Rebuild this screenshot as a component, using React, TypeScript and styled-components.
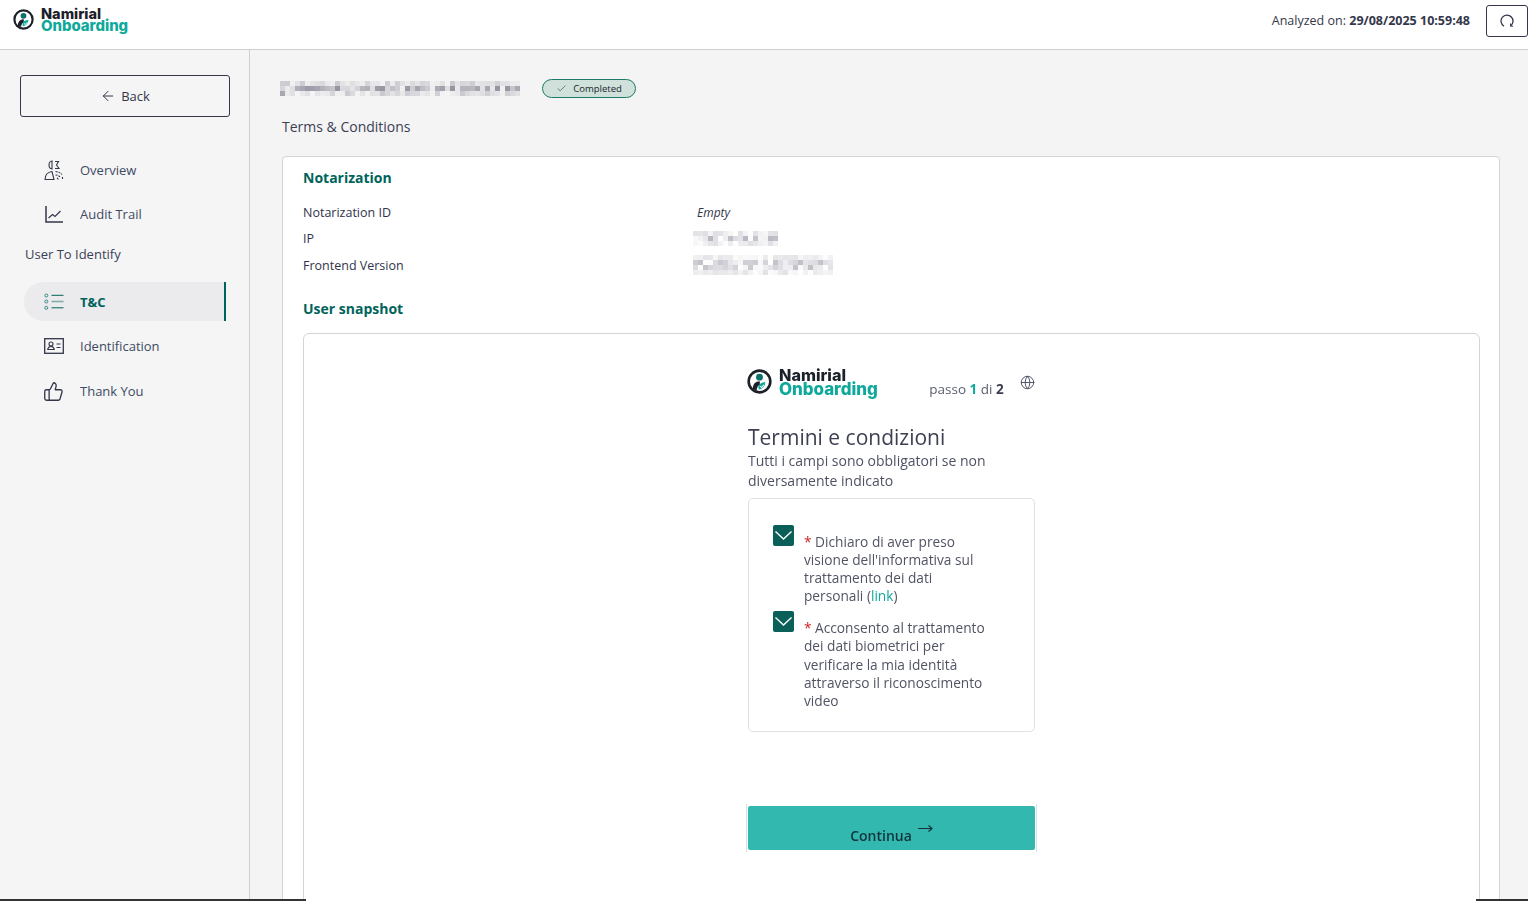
import { ReactNode } from "react";
import styled, { createGlobalStyle } from "styled-components";
import { ArrowLeft, Check, Globe, ThumbsUp } from "lucide-react";

const INK = "#34374b";
const TEAL = "#00635b";
const MINT = "#0fa99b";

const GlobalStyle = createGlobalStyle`
  html, body {
    margin: 0;
    height: 100%;
    overflow: hidden;
    background: #fff;
    font-family: "Open Sans", "Noto Sans", sans-serif;
    color: ${INK};
  }
  * { box-sizing: border-box; }
`;

const LogoMark = ({ size }: { size: number }) => (
  <svg width={size} height={size} viewBox="0 0 24 24" fill="none">
    <circle cx="12" cy="12" r="10.400" stroke="#1b2029" strokeWidth="2.500" />
    <circle cx="12" cy="7.800" r="3.300" fill="#0c6f69" />
    <path d="M5.500 19.500c0-5 2.500-7.800 6.800-7.800v3.600c-1.800.5-2.800 2-3 5.200z" fill="#1b2029" />
    <path d="M10.800 17.500c.6-3 3-4.800 6.800-4.800-.2 4-2.500 6.500-6.200 7z" fill="#0fa99b" />
    <path d="M12.600 16.500l1.500 1.300 2-2.500" stroke="#fff" strokeWidth="1" />
  </svg>
);

const Brand = styled.div`
  display: flex;
  align-items: center;
  gap: 7px;
  font-family: Inter, "Liberation Sans", sans-serif;
  font-weight: 800;
`;

const BrandText = styled.div<{ $small?: boolean }>`
  display: flex;
  flex-direction: column;
  font-size: ${(p) => (p.$small ? "14.500px" : "16.200px")};
  line-height: ${(p) => (p.$small ? "13px" : "14px")};
  color: #1b2029;
  span:last-child {
    color: ${MINT};
    font-size: ${(p) => (p.$small ? "14.900px" : "16.900px")};
  }
`;

const Header = styled.header`
  height: 50px;
  flex: none;
  display: flex;
  align-items: center;
  justify-content: space-between;
  padding: 0 0 10px 13px;
  background: #fff;
  border-bottom: 1px solid #cfcfcf;
`;

const HeaderRight = styled.div`
  display: flex;
  align-items: center;
  gap: 16px;
  font-size: 12.500px;
  margin-top: 2px;
  b { font-weight: 700; }
`;

const RefreshButton = styled.button`
  width: 42px;
  height: 32px;
  padding: 0;
  display: flex;
  align-items: center;
  justify-content: center;
  background: #fff;
  border: 1px solid ${INK};
  border-radius: 3px;
  color: ${INK};
`;

const Shell = styled.div`
  height: 100vh;
  display: flex;
  flex-direction: column;
`;

const Body = styled.div`
  flex: 1;
  min-height: 0;
  display: flex;
`;

const Sidebar = styled.aside`
  width: 250px;
  flex: none;
  padding: 25px 24px 0 20px;
  background: #f5f5f5;
  border-right: 1px solid #cfcfcf;
`;

const BackButton = styled.button`
  width: 210px;
  height: 42px;
  display: flex;
  align-items: center;
  justify-content: center;
  gap: 5px;
  background: transparent;
  border: 1px solid ${INK};
  border-radius: 3px;
  color: ${INK};
  font: 500 13px "Open Sans", sans-serif;
  margin-bottom: 31px;
`;

const NavItem = styled.div<{ $active?: boolean; $h: number }>`
  height: ${(p) => p.$h}px;
  width: 202px;
  margin-left: 4px;
  padding-left: 19px;
  display: flex;
  align-items: center;
  gap: 16px;
  font-size: 13px;
  font-weight: ${(p) => (p.$active ? 700 : 400)};
  color: ${(p) => (p.$active ? TEAL : "#3f4a63")};
  background: ${(p) => (p.$active ? "#ebebed" : "transparent")};
  border-radius: ${(p) => (p.$active ? "20px 0 0 20px" : "0")};
  border-right: ${(p) => (p.$active ? `2px solid ${TEAL}` : "none")};
`;

const NavIconBox = styled.span`
  width: 21px;
  display: flex;
  justify-content: center;
  color: ${INK};
`;

const NavSection = styled.div`
  height: 46px;
  margin-left: 5px;
  padding-top: 9px;
  font-size: 13px;
  color: #3a3f55;
`;

const Main = styled.main`
  flex: 1;
  min-width: 0;
  padding: 29px 28px 0 30px;
  background: #f4f4f4;
  overflow: hidden;
`;

const TitleRow = styled.div`
  display: flex;
  align-items: center;
  gap: 18px;
  height: 19px;
`;

const Badge = styled.div`
  width: 94px;
  height: 19px;
  display: flex;
  align-items: center;
  justify-content: center;
  gap: 6px;
  background: #cfe1da;
  border: 1px solid #1d7a68;
  border-radius: 10px;
  font-size: 9.500px;
  font-weight: 500;
  color: #20242e;
`;

const PageTitle = styled.h1`
  margin: 19px 0 19px 2px;
  font-size: 14px;
  line-height: 20px;
  font-weight: 500;
  color: #3a3f55;
`;

const Card = styled.section`
  margin-left: 2px;
  height: 800px;
  padding: 11px 19px 0 20px;
  background: #fff;
  border: 1px solid #d5d5d5;
  border-radius: 4px 4px 0 0;
`;

const CardHeading = styled.h2`
  margin: 0;
  font-size: 14px;
  line-height: 20px;
  font-weight: 700;
  color: ${TEAL};
`;

const InfoList = styled.dl`
  margin: 11px 0 0;
  display: grid;
  grid-template-columns: 392px 1fr;
  grid-auto-rows: 26.500px;
  align-items: center;
  font-size: 12.500px;
  dt { font-weight: 500; color: #30334a; }
  dd { margin: 0; }
`;

const EmptyValue = styled.dd`
  font-style: italic;
  font-size: 12px;
  padding-left: 2px;
`;

const SnapshotHeading = styled(CardHeading)`
  margin-top: 20px;
`;

const Snapshot = styled.div`
  margin-top: 14px;
  height: 700px;
  border: 1px solid #d5d5d5;
  border-radius: 6px 6px 0 0;
  display: flex;
  justify-content: center;
  padding: 34px 0 0 0;
`;

const SnapshotColumn = styled.div`
  width: 287px;
  filter: blur(0.35px);
  color: #4a4d5f;
`;

const SnapshotTop = styled.div`
  display: flex;
  align-items: flex-start;
  height: 55px;
`;

const SnapshotBrandWrap = styled.div`
  margin-left: -1px;
  width: 183px;
`;

const Steps = styled.div`
  margin-top: 12px;
  width: 91px;
  font-size: 13.500px;
  color: #5a5d6e;
  white-space: nowrap;
  b { color: #3a3d4f; }
  b.now { color: ${MINT}; }
`;

const StepGlobe = styled.span`
  margin-top: 5px;
  color: #55586a;
`;

const SnapshotTitle = styled.h3`
  margin: 0;
  font-size: 21px;
  line-height: 28px;
  font-weight: 400;
  color: #3d4053;
`;

const SnapshotLead = styled.p`
  margin: 0 0 7px;
  font-size: 14px;
  line-height: 20px;
  color: #4f5263;
`;

const ConsentBox = styled.div`
  height: 234px;
  padding: 26px 24px 0 24px;
  border: 1px solid #e0e0e0;
  border-radius: 5px;
  display: flex;
  flex-direction: column;
  gap: 5.500px;
`;

const ConsentRow = styled.div`
  display: flex;
  align-items: flex-start;
  gap: 10px;
`;

const CheckSquare = styled.span`
  width: 21px;
  height: 21px;
  flex: none;
  background: #0a5f58;
  border-radius: 2px;
`;

const ConsentText = styled.div`
  width: 190px;
  padding-top: 8px;
  font-size: 13.700px;
  line-height: 18.300px;
  color: #515464;
  i { font-style: normal; color: #c22; }
  a { color: ${MINT}; }
`;

const ContinueOuter = styled.div`
  margin: 72px -2px 0;
  padding: 2px 1px;
  border-left: 1px solid #cfe3ec;
  border-right: 1px solid #cfe3ec;
`;

const ContinueButton = styled.div`
  height: 44px;
  display: flex;
  align-items: flex-end;
  justify-content: center;
  gap: 6px;
  padding-bottom: 5px;
  background: #32b8ae;
  border-radius: 2px;
  font-size: 14px;
  font-weight: 600;
  color: #11343d;
`;

const ArrowMark = styled.span`
  margin-bottom: 12px;
  display: flex;
`;

const Footer = styled.div`
  position: fixed;
  left: 0;
  right: 0;
  bottom: 0;
  display: flex;
  justify-content: space-between;
`;

const FooterBar = styled.div<{ $w: number }>`
  width: ${(p) => p.$w}px;
  height: 2px;
  background: #333;
`;

const MosaicGrid = styled.div<{ $w: number; $h: number; $cell: number }>`
  width: ${(p) => p.$w}px;
  height: ${(p) => p.$h}px;
  display: flex;
  flex-wrap: wrap;
  align-content: flex-start;
  overflow: hidden;
  span {
    width: ${(p) => p.$cell}px;
    height: ${(p) => p.$cell}px;
  }
`;

const BlurredValue = styled.div`
  margin-left: -2px;
`;

// the blurred-out values of the original are coarse gray squares
const Mosaic = ({ w, h, cell, seed, strength }: { w: number; h: number; cell: number; seed: number; strength: number }) => {
  const cols = Math.ceil(w / cell);
  const total = cols * Math.ceil(h / cell);
  let s = seed;
  const cells = Array.from({ length: total }, (_, i) => {
    s = (s * 9301 + 49297) % 233280;
    const row = Math.floor(i / cols);
    const mid = row > 0 && row < Math.ceil(h / cell) - 1 ? 1 : 0.45;
    return (s / 233280) * strength * mid;
  });
  return (
    <MosaicGrid $w={w} $h={h} $cell={cell}>
      {cells.map((a, i) => (
        <span key={i} style={{ background: `rgba(70,70,95,${a.toFixed(2)})` }} />
      ))}
    </MosaicGrid>
  );
};

const OverviewIcon = () => (
  <svg width="20" height="21" viewBox="0 0 20 21" fill="none" stroke="currentColor" strokeWidth="1.100">
    <path d="M8 1C6 1.300 5 3 5 5s1 3.700 3 4z" />
    <path d="M11 1.500h3.500l-2 3.500 2.500 3.500h-4" />
    <path d="M1 19.500c0-4 2.500-7.500 7-8l2 8z" />
    <path d="M11.500 11.500c2.800.3 5 1.300 6.500 3M11.500 15c2 0 3.500.7 4.500 2M18.500 17v2.500M13 18l1.500 1.500" strokeDasharray="2 1" />
  </svg>
);

const AuditIcon = () => (
  <svg width="18" height="17" viewBox="0 0 18 17" fill="none" stroke="currentColor">
    <path d="M1 0v16h17" strokeWidth="1.500" />
    <path d="M3.500 12l4-3.500 2.500 2 5.500-5.500" strokeWidth="1.200" />
  </svg>
);

const ListIcon = () => (
  <svg width="20" height="17" viewBox="0 0 20 17" fill="none" stroke={TEAL}>
    <circle cx="2.300" cy="2.500" r="1.500" opacity=".7" />
    <circle cx="2.300" cy="8.500" r="1.500" opacity=".7" />
    <circle cx="2.300" cy="14.800" r="1.500" opacity=".7" />
    <path d="M7.500 2.300H19.500M7.500 14.800H19.500" />
    <path d="M7.500 8.500H19.500" strokeWidth="1.600" opacity=".45" />
  </svg>
);

const IdCardIcon = () => (
  <svg width="20" height="16" viewBox="0 0 20 16" fill="none" stroke="currentColor">
    <rect x=".7" y=".7" width="18.600" height="14.600" strokeWidth="1.300" />
    <circle cx="7" cy="6" r="2" strokeWidth="1.100" />
    <path d="M3.700 11.500c.3-2 1.700-3 3.300-3s3 1 3.300 3z" strokeWidth="1.100" />
    <path d="M12.500 6h4M12.500 9.500h4" strokeWidth="1.200" />
  </svg>
);

const RefreshIcon = () => (
  <svg width="14" height="14" viewBox="0 0 14 14" fill="none" stroke="currentColor" strokeWidth="1.300">
    <path d="M4 12.300A6 6 0 1 1 10.500 12" />
    <path d="M10.500 9.500v2.700h2.500" strokeWidth="1" />
  </svg>
);

const ThinArrow = () => (
  <svg width="15" height="9" viewBox="0 0 15 9" fill="none" stroke="#11343d" strokeWidth="1.200">
    <path d="M0 4.500h14M10.500 1.500l3.500 3-3.500 3" />
  </svg>
);

const CheckedMark = () => (
  <svg width="21" height="21" viewBox="0 0 21 21" fill="none" stroke="#fff" strokeWidth="1.400">
    <path d="M2.500 6.500l8 7.500 8-7.500" />
  </svg>
);

const nav: { label: string; icon: ReactNode; h: number; active?: boolean }[] = [
  { label: "T&C", icon: <ListIcon />, h: 39, active: true },
  { label: "Identification", icon: <IdCardIcon />, h: 50 },
  { label: "Thank You", icon: <ThumbsUp size={21} strokeWidth={1.500} />, h: 40 },
];

export default function App() {
  return (
    <Shell>
      <GlobalStyle />
      <Header>
        <Brand>
          <LogoMark size={21} />
          <BrandText $small>
            <span>Namirial</span>
            <span>Onboarding</span>
          </BrandText>
        </Brand>
        <HeaderRight>
          <span>
            Analyzed on: <b>29/08/2025 10:59:48</b>
          </span>
          <RefreshButton>
            <RefreshIcon />
          </RefreshButton>
        </HeaderRight>
      </Header>
      <Body>
        <Sidebar>
          <BackButton>
            <ArrowLeft size={16} strokeWidth={1.500} /> Back
          </BackButton>
          <NavItem $h={44}>
            <NavIconBox>
              <OverviewIcon />
            </NavIconBox>
            Overview
          </NavItem>
          <NavItem $h={44}>
            <NavIconBox>
              <AuditIcon />
            </NavIconBox>
            Audit Trail
          </NavItem>
          <NavSection>User To Identify</NavSection>
          {nav.map((n) => (
            <NavItem key={n.label} $h={n.h} $active={n.active}>
              <NavIconBox>{n.icon}</NavIconBox>
              {n.label}
            </NavItem>
          ))}
        </Sidebar>
        <Main>
          <TitleRow>
            <Mosaic w={244} h={15} cell={5} seed={17} strength={0.55} />
            <Badge>
              <Check size={11} strokeWidth={1.200} />
              Completed
            </Badge>
          </TitleRow>
          <PageTitle>Terms &amp; Conditions</PageTitle>
          <Card>
            <CardHeading>Notarization</CardHeading>
            <InfoList>
              <dt>Notarization ID</dt>
              <EmptyValue>Empty</EmptyValue>
              <dt>IP</dt>
              <dd>
                <BlurredValue>
                  <Mosaic w={85} h={15} cell={5} seed={91} strength={0.4} />
                </BlurredValue>
              </dd>
              <dt>Frontend Version</dt>
              <dd>
                <BlurredValue>
                  <Mosaic w={140} h={20} cell={5} seed={233} strength={0.35} />
                </BlurredValue>
              </dd>
            </InfoList>
            <SnapshotHeading>User snapshot</SnapshotHeading>
            <Snapshot>
              <SnapshotColumn>
                <SnapshotTop>
                  <SnapshotBrandWrap>
                    <Brand>
                      <LogoMark size={25} />
                      <BrandText>
                        <span>Namirial</span>
                        <span>Onboarding</span>
                      </BrandText>
                    </Brand>
                  </SnapshotBrandWrap>
                  <Steps>
                    passo <b className="now">1</b> di <b>2</b>
                  </Steps>
                  <StepGlobe>
                    <Globe size={15} strokeWidth={1.600} />
                  </StepGlobe>
                </SnapshotTop>
                <SnapshotTitle>Termini e condizioni</SnapshotTitle>
                <SnapshotLead>Tutti i campi sono obbligatori se non diversamente indicato</SnapshotLead>
                <ConsentBox>
                  <ConsentRow>
                    <CheckSquare>
                      <CheckedMark />
                    </CheckSquare>
                    <ConsentText>
                      <i>*</i> Dichiaro di aver preso visione dell'informativa sul trattamento dei dati personali (<a>link</a>)
                    </ConsentText>
                  </ConsentRow>
                  <ConsentRow>
                    <CheckSquare>
                      <CheckedMark />
                    </CheckSquare>
                    <ConsentText>
                      <i>*</i> Acconsento al trattamento dei dati biometrici per verificare la mia identità attraverso il riconoscimento video
                    </ConsentText>
                  </ConsentRow>
                </ConsentBox>
                <ContinueOuter>
                  <ContinueButton>
                    Continua
                    <ArrowMark>
                      <ThinArrow />
                    </ArrowMark>
                  </ContinueButton>
                </ContinueOuter>
              </SnapshotColumn>
            </Snapshot>
          </Card>
        </Main>
      </Body>
      <Footer>
        <FooterBar $w={306} />
        <FooterBar $w={52} />
      </Footer>
    </Shell>
  );
}
